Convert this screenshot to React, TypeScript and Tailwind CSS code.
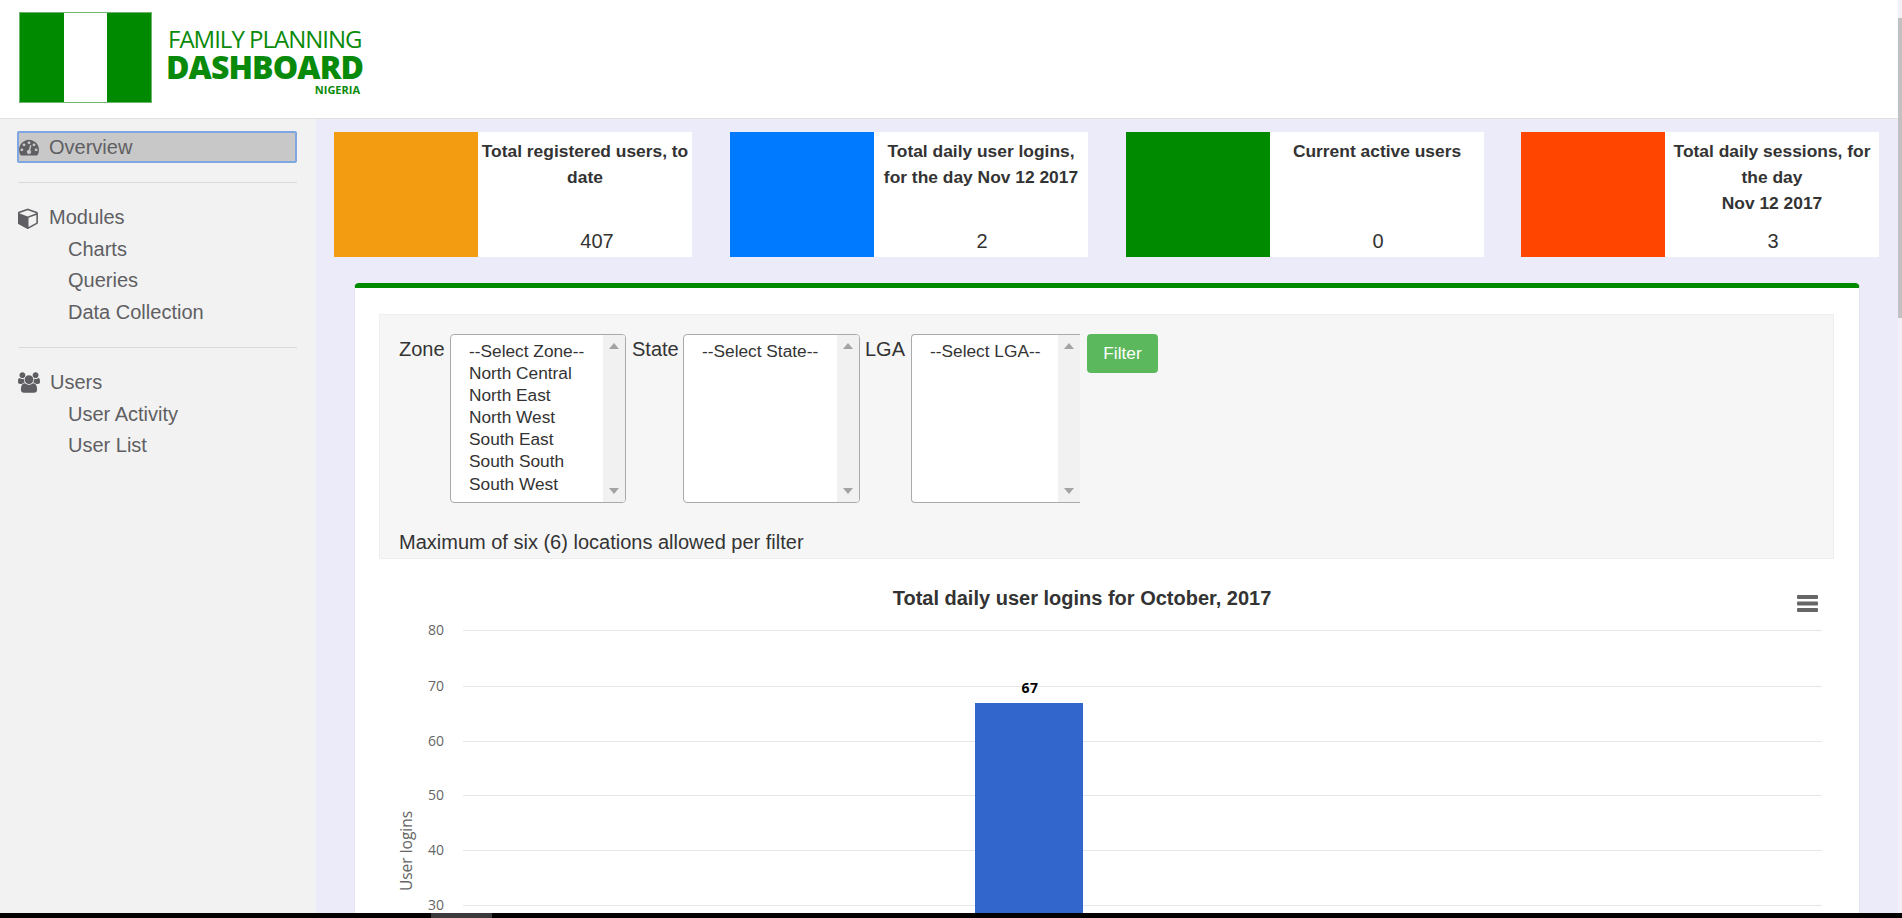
const stats = [
  { color: 'bg-[#f39c12]', title: ['Total registered users, to date'], value: '407', valuePad: 'pl-[24px]', gap: '' },
  { color: 'bg-[#007bff]', title: ['Total daily user logins, for the day Nov 12 2017'], value: '2', valuePad: 'pl-[2px]', gap: 'ml-[38px]' },
  { color: 'bg-[#008a00]', title: ['Current active users'], value: '0', valuePad: 'pl-[2px]', gap: 'ml-[38px]' },
  { color: 'bg-[#ff4500]', title: ['Total daily sessions, for the day', 'Nov 12 2017'], value: '3', valuePad: 'pl-[2px]', gap: 'ml-[37px]' },
]

const zones = ['--Select Zone--', 'North Central', 'North East', 'North West', 'South East', 'South South', 'South West']

function DashboardIcon() {
  return (
    <svg width="20" height="20" viewBox="0 0 1792 1792" fill="currentColor">
      <path d="M384 1152q0-53-37.5-90.5t-90.5-37.5-90.5 37.5-37.5 90.5 37.5 90.5 90.5 37.5 90.5-37.5 37.5-90.5zm192-448q0-53-37.5-90.5t-90.5-37.5-90.5 37.5-37.5 90.5 37.5 90.5 90.5 37.5 90.5-37.5 37.5-90.5zm428 481l101-382q6-26-7.5-48.5t-38.5-29.5-48 6.5-30 39.5l-101 382q-60 5-107 43.5t-63 98.5q-20 77 20 146t117 89 146-20 89-117q16-60-6-117t-72-91zm660-33q0-53-37.5-90.5t-90.5-37.5-90.5 37.5-37.5 90.5 37.5 90.5 90.5 37.5 90.5-37.5 37.5-90.5zm-640-640q0-53-37.5-90.5t-90.5-37.5-90.5 37.5-37.5 90.5 37.5 90.5 90.5 37.5 90.5-37.5 37.5-90.5zm448 192q0-53-37.5-90.5t-90.5-37.5-90.5 37.5-37.5 90.5 37.5 90.5 90.5 37.5 90.5-37.5 37.5-90.5zm320 448q0 261-141 483-19 29-54 29h-1402q-35 0-54-29-141-221-141-483 0-182 71-348t191-286 286-191 348-71 348 71 286 191 191 286 71 348z" />
    </svg>
  )
}

function CubeIcon() {
  return (
    <svg width="21" height="22" viewBox="128 0 1536 1792" fill="currentColor">
      <path d="M896 1629l640-349v-636l-640 233v752zm-64-865l698-254-698-254-698 254zm832-252v768q0 35-18 65t-49 47l-704 384q-28 16-61 16t-61-16l-704-384q-31-17-49-47t-18-65v-768q0-40 23-73t61-47l704-256q22-8 44-8t44 8l704 256q38 14 61 47t23 73z" />
    </svg>
  )
}

function UsersIcon() {
  return (
    <svg width="22" height="21" viewBox="0 0 1920 1792" fill="currentColor">
      <path d="M593 896q-162 5-265 128h-134q-82 0-138-40.500t-56-118.500q0-353 124-353 6 0 43.500 21t97.500 42.500 119 21.500q67 0 133-23-5 37-5 66 0 139 81 256zm1071 637q0 120-73 189.500t-194 69.500h-874q-121 0-194-69.500t-73-189.500q0-53 3.500-103.500t14-109 26.500-108.500 43-97.500 62-81 85.500-53.500 111.500-20q10 0 43 21.500t73 48 107 48 135 21.500 135-21.500 107-48 73-48 43-21.500q61 0 111.500 20t85.500 53.500 62 81 43 97.500 26.500 108.500 14 109 3.500 103.500zm-1024-1277q0 106-75 181t-181 75-181-75-75-181 75-181 181-75 181 75 75 181zm704 384q0 159-112.500 271.500t-271.500 112.500-271.500-112.500-112.500-271.500 112.500-271.500 271.500-112.500 271.500 112.500 112.500 271.500zm576 225q0 78-56 118.500t-138 40.500h-134q-103-123-265-128 81-117 81-256 0-29-5-66 66 23 133 23 59 0 119-21.500t97.500-42.500 43.500-21q124 0 124 353zm-128-609q0 106-75 181t-181 75-181-75-75-181 75-181 181-75 181 75 75 181z" />
    </svg>
  )
}

function StatCard({ color, title, value, valuePad, gap }: { color: string; title: string[]; value: string; valuePad: string; gap: string }) {
  return (
    <div className={`flex w-[358px] h-[125px] bg-white ${gap}`}>
      <div className={`w-[144px] ${color}`} />
      <div className="flex-1 flex flex-col items-center text-center px-[2px] pt-[6px] text-[#333]">
        <div className="flex-1 text-[17.4px] leading-[26px] font-bold">
          {title.map((line) => (
            <div key={line}>{line}</div>
          ))}
        </div>
        <div className={`text-[20px] leading-[26px] pb-[3px] ${valuePad}`}>{value}</div>
      </div>
    </div>
  )
}

function ListBox({ options, width, cut }: { options: string[]; width: string; cut?: boolean }) {
  return (
    <div className={`flex h-[169px] ${width} bg-white border border-[#aaa] ${cut ? 'border-r-0 rounded-l-[4px]' : 'rounded-[4px]'} overflow-hidden`}>
      <div className="flex-1 pl-[18px] pt-[5px] text-[17.3px] leading-[22.1px] text-[#333]">
        {options.map((o) => (
          <div key={o}>{o}</div>
        ))}
      </div>
      <div className="w-[22px] bg-[#f1f1f1] flex flex-col items-center justify-between py-[8px] text-[#a3a3a3]">
        <svg width="10" height="6" viewBox="0 0 10 6"><path d="M5 0 10 6H0Z" fill="currentColor" /></svg>
        <svg width="10" height="6" viewBox="0 0 10 6"><path d="M0 0H10L5 6Z" fill="currentColor" /></svg>
      </div>
    </div>
  )
}

function Chart() {
  const ticks = [
    { label: '80', y: 52 },
    { label: '70', y: 108 },
    { label: '60', y: 163 },
    { label: '50', y: 217 },
    { label: '40', y: 272 },
    { label: '30', y: 327 },
  ]
  return (
    <svg width="1480" height="345" className="block">
      <text x="704" y="27" textAnchor="middle" fontFamily="Liberation Sans" fontWeight="700" fontSize="20" fill="#333">
        Total daily user logins for October, 2017
      </text>
      <g fill="#666">
        <rect x="1419" y="17" width="21" height="4" rx="1" />
        <rect x="1419" y="23.500" width="21" height="4" rx="1" />
        <rect x="1419" y="30" width="21" height="4" rx="1" />
      </g>
      {ticks.map((t) => (
        <g key={t.label}>
          <line x1="85" x2="1444" y1={t.y + 0.5} y2={t.y + 0.5} stroke="#e6e6e6" />
          <text x="66" y={t.y + 5} textAnchor="end" fontFamily="Open Sans" fontSize="14" fill="#666">
            {t.label}
          </text>
        </g>
      ))}
      <rect x="597" y="125" width="108" height="220" fill="#3366cc" />
      <text x="652" y="115" textAnchor="middle" fontFamily="Open Sans" fontWeight="700" fontSize="14" letterSpacing="0.5" fill="#000">
        67
      </text>
      <text transform="translate(34 273) rotate(-90)" textAnchor="middle" fontFamily="Open Sans" fontSize="15.5" fill="#666">
        User logins
      </text>
    </svg>
  )
}

export default function App() {
  return (
    <div className="h-[918px] flex flex-col overflow-hidden font-['Liberation_Sans',sans-serif] bg-[#ebebfa]">
      <div className="flex-1 flex min-h-0">
        <div className="flex-1 min-w-0 flex flex-col">
          <header className="h-[119px] shrink-0 bg-white border-b border-[#e0e0e0] flex items-center pl-[19px]">
            {/* flag */}
            <div className="flex w-[133px] h-[91px] border border-[#6fb56f] mb-[3px]">
              <div className="flex-1 bg-[#008a00]" />
              <div className="w-[43px] bg-white" />
              <div className="flex-1 bg-[#008a00]" />
            </div>
            <div className="ml-[16px] mt-[5px] text-[#0a8a0a] font-['Open_Sans',sans-serif] w-[196px]">
              <div className="text-[24px] leading-[25px] tracking-[-1px] whitespace-nowrap">FAMILY PLANNING</div>
              <div className="-ml-[2px] text-[32px] leading-[31px] font-extrabold tracking-[-0.9px] whitespace-nowrap">DASHBOARD</div>
              <div className="text-[11px] leading-[15px] font-bold text-right pr-[4px]">NIGERIA</div>
            </div>
          </header>

          <div className="flex-1 flex min-h-0">
            <aside className="w-[316px] shrink-0 bg-[#f2f2f2] pt-[12px] pl-[18px] pr-[19px] text-[20px] leading-[31.5px] text-[#5f5f63]">
              <div className="flex items-center h-[32px] -ml-px border-2 border-[#7ea6e0] rounded-[2px] bg-[#c8c8c8]">
                <DashboardIcon />
                <span className="ml-[10px] pt-[2px]">Overview</span>
              </div>
              <hr className="mt-[19px] mb-[19px] border-[#d9d9d9]" />
              <div className="flex items-center">
                <CubeIcon />
                <span className="ml-[10px]">Modules</span>
              </div>
              <div className="pl-[50px]">
                <div>Charts</div>
                <div>Queries</div>
                <div>Data Collection</div>
              </div>
              <hr className="mt-[19px] mb-[19px] border-[#d9d9d9]" />
              <div className="flex items-center">
                <UsersIcon />
                <span className="ml-[10px]">Users</span>
              </div>
              <div className="pl-[50px]">
                <div>User Activity</div>
                <div>User List</div>
              </div>
            </aside>

            <main className="flex-1 min-w-0 pl-[18px] pr-[19px] pt-[13px]">
              <div className="flex">
                {stats.map((s) => (
                  <StatCard key={s.color} {...s} />
                ))}
              </div>
              <section className="mt-[26px] ml-[20px] mr-[19px] bg-white border-x border-[#e3e3ef] border-t-[5px] border-t-[#008a00] rounded-t-[5px] pt-[26px] pl-[24px] pr-[25px] h-[700px]">
                <div className="bg-[#f6f6f6] border border-[#eeeeee] h-[245px] pl-[19px] pt-[19px]">
                  <div className="flex items-start text-[20px] text-[#333]">
                    <span className="w-[51px] mt-px leading-[28px]">Zone</span>
                    <ListBox options={zones} width="w-[176px]" />
                    <span className="ml-[6px] w-[51px] mt-px leading-[28px]">State</span>
                    <ListBox options={['--Select State--']} width="w-[177px]" />
                    <span className="ml-[5px] w-[46px] mt-px leading-[28px]">LGA</span>
                    <ListBox options={['--Select LGA--']} width="w-[169px]" cut />
                    <button className="ml-[7px] w-[71px] h-[39px] bg-[#5cb85c] rounded-[4px] text-white text-[17.3px]">
                      Filter
                    </button>
                  </div>
                  <p className="mt-[25px] text-[20px] leading-[28px] text-[#333]">Maximum of six (6) locations allowed per filter</p>
                </div>
                <div className="mt-[19px] -ml-px">
                  <Chart />
                </div>
              </section>
            </main>
          </div>
        </div>

        {/* page scrollbar */}
        <div className="w-[4px] shrink-0 bg-[#f0f0f6] pt-[18px]">
          <div className="h-[300px] bg-[#c1c1c1]" />
        </div>
      </div>

      <footer className="h-[5px] shrink-0 bg-black pl-[431px]">
        <div className="w-[61px] h-full bg-[#3a3a3a]" />
      </footer>
    </div>
  )
}
